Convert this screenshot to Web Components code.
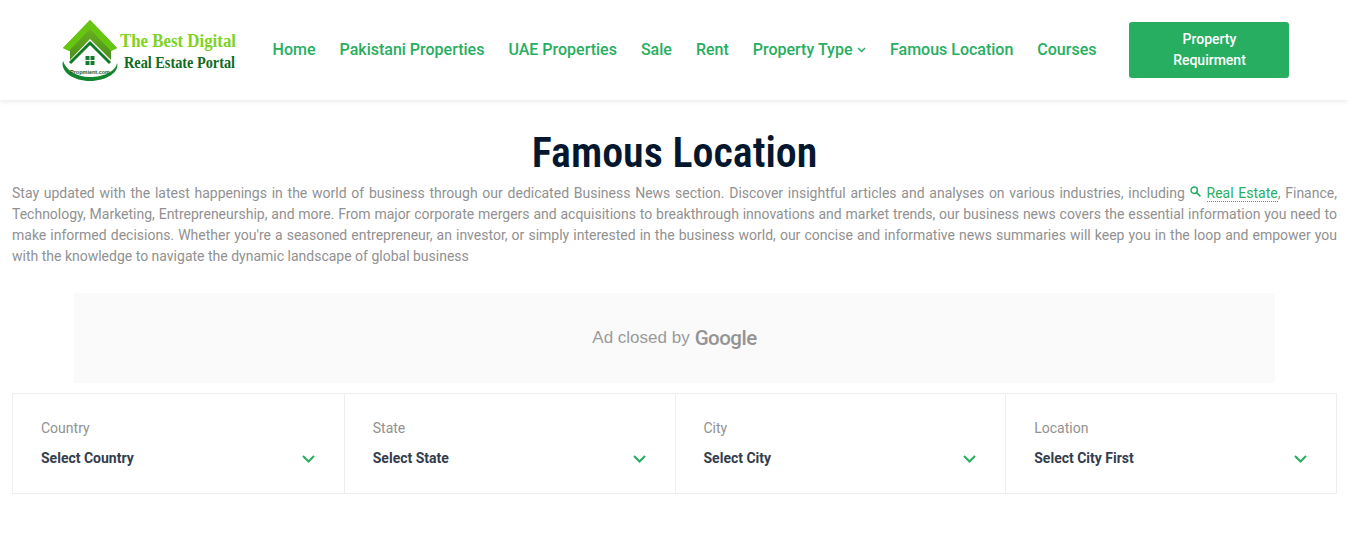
<!DOCTYPE html>
<html lang="en">
<head>
<meta charset="utf-8">
<title>Famous Location</title>
<style>
    html, body { margin: 0; padding: 0; background: #fff; }
    body { font-family: Roboto, "Liberation Sans", sans-serif; height: 539px; overflow: hidden; }
</style>
</head>
<body>
<site-header></site-header>
<page-intro heading="Famous Location">
    Stay updated with the latest happenings in the world of business through our dedicated Business News section. Discover insightful articles and analyses on various industries, including <key-link>Real Estate</key-link>, Finance, Technology, Marketing, Entrepreneurship, and more. From major corporate mergers and acquisitions to breakthrough innovations and market trends, our business news covers the essential information you need to make informed decisions. Whether you're a seasoned entrepreneur, an investor, or simply interested in the business world, our concise and informative news summaries will keep you in the loop and empower you with the knowledge to navigate the dynamic landscape of global business
</page-intro>
<ad-slot></ad-slot>
<location-filter>
    <filter-select label="Country" value="Select Country"></filter-select>
    <filter-select label="State" value="Select State"></filter-select>
    <filter-select label="City" value="Select City"></filter-select>
    <filter-select label="Location" value="Select City First"></filter-select>
</location-filter>

<script>
class SiteHeader extends HTMLElement {
    constructor() {
        super()
        this.attachShadow({ mode: 'open' })
        this.shadowRoot.innerHTML = `
            <style>
                :host {
                    display: flex;
                    align-items: center;
                    height: 100px;
                    padding-left: 60px;
                    box-sizing: border-box;
                    background: #fff;
                    box-shadow: 0 1px 5px rgba(0,0,0,0.1);
                    position: relative;
                }
                svg.logo { width: 180px; height: 64px; flex: none; display: block; overflow: visible; }
                nav {
                    display: flex;
                    align-items: center;
                    gap: 24px;
                    margin: -2px 0 0 32.6px;
                    font-size: 16px;
                    font-weight: 500;
                    color: #27ae60;
                    white-space: nowrap;
                }
                nav span { display: flex; align-items: center; gap: 4.5px; }
                nav svg { margin-top: 2px; }
                button {
                    width: 160px;
                    height: 56px;
                    margin-left: 33px;
                    padding: 0 30px;
                    border: 0;
                    border-radius: 3px;
                    background: #27ae60;
                    color: #fff;
                    font: 500 14px/21px Roboto, sans-serif;
                }
            </style>
            <svg class="logo" viewBox="60 18 180 64">
                <defs>
                    <linearGradient id="roof" x1="0" y1="0" x2="0" y2="1">
                        <stop offset="0" stop-color="#6fb81f"/>
                        <stop offset="1" stop-color="#4c8f1d"/>
                    </linearGradient>
                </defs>
                <path d="M90 20 L117 48 L111 51 L111 60 L90 39 L70 60 L70 51 L63 48 Z" fill="url(#roof)"/>
                <path d="M90 20 L117 48 L111 51 L90 29 L69 51 L63 48 Z" fill="#66c50f"/>
                <path d="M70 63 L90 43 L110 63" fill="none" stroke="#117a25" stroke-width="3"/>
                <path d="M85.5 56 h4 v4 h-4 z M90.5 56 h4 v4 h-4 z M85.5 61 h4 v4 h-4 z M90.5 61 h4 v4 h-4 z" fill="#167a2c"/>
                <path d="M63 61 C60 72 74 81 90 81 C106 81 120 72 117 63 C116 71 104 77 90 77 C76 77 66 70 63 61 Z" fill="#12862e"/>
                <text x="90" y="73.5" text-anchor="middle" font-family="Liberation Sans, sans-serif" font-weight="700" font-size="5.5" fill="#1d5a2a">Propmient.com</text>
                <text x="120" y="47" textLength="116" lengthAdjust="spacingAndGlyphs" font-family="Liberation Serif, serif" font-weight="700" font-size="18" fill="#7ed321">The Best Digital</text>
                <text x="124" y="68" textLength="111" lengthAdjust="spacingAndGlyphs" font-family="Liberation Serif, serif" font-weight="700" font-size="16" fill="#0f6b22">Real Estate Portal</text>
            </svg>
            <nav>
                <span>Home</span>
                <span>Pakistani Properties</span>
                <span>UAE Properties</span>
                <span>Sale</span>
                <span>Rent</span>
                <span>Property Type
                    <svg width="9" height="6" viewBox="0 0 9 6" fill="none" stroke="#27ae60" stroke-width="1.5"><path d="M1 1 L4.5 4.5 L8 1"/></svg>
                </span>
                <span>Famous Location</span>
                <span>Courses</span>
            </nav>
            <button>Property Requirment</button>
        `
    }
}

class PageIntro extends HTMLElement {
    constructor() {
        super()
        this.attachShadow({ mode: 'open' })
        this.shadowRoot.innerHTML = `
            <style>
                :host { display: block; padding: 0 11px 0 12px; }
                h1 {
                    margin: 28px 0 0;
                    height: 50px;
                    font: 600 42px/50px "Liberation Sans Narrow", "Roboto Condensed", Roboto, sans-serif;
                    color: #04172e;
                    text-align: center;
                }
                p {
                    margin: 5px 0 0;
                    font-size: 14px;
                    line-height: 21px;
                    color: #919191;
                    text-align: justify;
                }
            </style>
            <h1></h1>
            <p><slot></slot></p>
        `
    }

    connectedCallback() {
        this.shadowRoot.querySelector('h1').textContent = this.getAttribute('heading')
    }
}

class KeyLink extends HTMLElement {
    constructor() {
        super()
        this.attachShadow({ mode: 'open' })
        this.shadowRoot.innerHTML = `<style>
                :host { display: inline; color: #27ae60; }
                svg { vertical-align: 1px; margin-right: 6px; }
                span { border-bottom: 1px dotted #27ae60; }
            </style><svg width="11" height="11" viewBox="0 0 11 11" fill="none" stroke="#27ae60" stroke-width="1.5"><circle cx="4.2" cy="4.2" r="3.2"/><path d="M6.6 6.6 L10.4 10.4"/></svg><span><slot></slot></span>`
    }
}

class AdSlot extends HTMLElement {
    constructor() {
        super()
        this.attachShadow({ mode: 'open' })
        this.shadowRoot.innerHTML = `
            <style>
                :host {
                    display: flex;
                    align-items: center;
                    justify-content: center;
                    gap: 5px;
                    height: 90px;
                    margin: 26px 73px 10px 74px;
                    background: #fafafa;
                    color: #9a9a9a;
                    font: 400 17px "Liberation Sans", Arial, sans-serif;
                }
                b { font: 500 20.5px Roboto, sans-serif; color: #949494; letter-spacing: -0.5px; }
            </style>
            <span>Ad closed by</span><b>Google</b>
        `
    }
}

class LocationFilter extends HTMLElement {
    constructor() {
        super()
        this.attachShadow({ mode: 'open' })
        this.shadowRoot.innerHTML = `
            <style>
                :host {
                    display: grid;
                    grid-template-columns: repeat(4, 1fr);
                    height: 101px;
                    margin: 0 11px 0 12px;
                    box-sizing: border-box;
                    border: 1px solid #eee;
                }
            </style>
            <slot></slot>
        `
    }
}

class FilterSelect extends HTMLElement {
    constructor() {
        super()
        this.attachShadow({ mode: 'open' })
        this.shadowRoot.innerHTML = `
            <style>
                :host {
                    display: block;
                    padding: 24px 29px 0 28px;
                    border-left: 1px solid #eee;
                    font-size: 14px;
                }
                :host(:first-child) { border-left: 0; }
                label { display: block; line-height: 21px; color: #919191; }
                div {
                    display: flex;
                    align-items: center;
                    justify-content: space-between;
                    margin-top: 9px;
                    line-height: 21px;
                    font-weight: 700;
                    color: #333d4d;
                }
                svg { display: block; }
            </style>
            <label></label>
            <div>
                <span></span>
                <svg width="13" height="8" viewBox="0 0 13 8" fill="none" stroke="#27ae60" stroke-width="2"><path d="M1 1 L6.5 6.5 L12 1"/></svg>
            </div>
        `
    }

    connectedCallback() {
        this.shadowRoot.querySelector('label').textContent = this.getAttribute('label')
        this.shadowRoot.querySelector('span').textContent = this.getAttribute('value')
    }
}

customElements.define('site-header', SiteHeader)
customElements.define('page-intro', PageIntro)
customElements.define('key-link', KeyLink)
customElements.define('ad-slot', AdSlot)
customElements.define('location-filter', LocationFilter)
customElements.define('filter-select', FilterSelect)
</script>
</body>
</html>
